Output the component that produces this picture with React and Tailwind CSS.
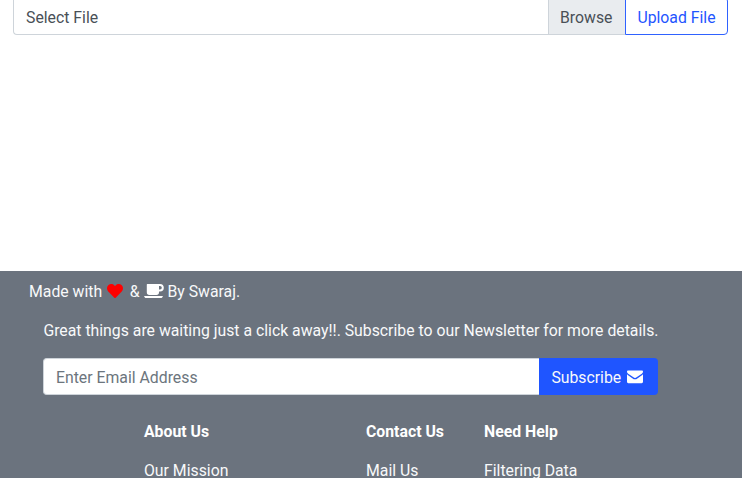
import { FaHeart } from "react-icons/fa";

const columns = [
  { title: "About Us", link: "Our Mission", width: "w-[222px]" },
  { title: "Contact Us", link: "Mail Us", width: "w-[118px]" },
  { title: "Need Help", link: "Filtering Data", width: "w-[120px]" },
];

function CoffeeIcon({ className }) {
  return (
    <svg viewBox="0 0 20 16" fill="currentColor" className={className}>
      <path
        fillRule="evenodd"
        d="M3.3 1H16a3.7 3.7 0 0 1 0 7.6h-1V9.300a2.600 2.600 0 0 1-2.600 2.600H5.400A2.600 2.600 0 0 1 2.800 9.300V1.500a.5.5 0 0 1 .5-.5ZM15 3v3.600h1a1.800 1.800 0 0 0 0-3.600Z"
      />
      <path d="M.3 13H18.700c.2 0 .2.200.1.500-.3.900-.9 1.500-1.800 1.500H2c-.9 0-1.500-.6-1.800-1.500-.1-.3-.1-.5.1-.5Z" />
    </svg>
  );
}

function EnvelopeIcon({ className }) {
  return (
    <svg viewBox="0 0 16 16" fill="currentColor" className={className}>
      <path d="M1.100 1.500h13.800c.6 0 1.100.5 1.100 1.100 0 .9-.5 1.600-1.200 2.100L9.600 8.300C9 8.700 8.600 9 8 9s-1-.3-1.600-.7L1.200 4.700C.5 4.200 0 3.500 0 2.600c0-.6.500-1.100 1.100-1.100Z" />
      <path d="M0 5.300c.2.200.5.400.7.600l5 3.500c.7.500 1.400.9 2.300.9s1.600-.4 2.300-.9l5-3.500c.2-.2.5-.4.7-.6v7.500c0 .8-.6 1.400-1.400 1.400H1.400c-.8 0-1.400-.6-1.400-1.400Z" />
    </svg>
  );
}

function UploadBar() {
  return (
    <div className="-mt-[3px] ml-[13px] flex h-[38px] w-[715px] shrink-0">
      <div className="flex min-w-0 flex-1 rounded-l border border-r-0 border-[#ced4da] text-[#495057]">
        <span className="flex-1 px-3 leading-[39px]">Select File</span>
        <span className="w-[77px] border-l border-[#ced4da] bg-[#e9ecef] pl-[11px] leading-[39px]">
          Browse
        </span>
      </div>
      <button className="w-[103px] whitespace-nowrap rounded-r border border-[#2f62ff] pt-[3px] text-[#1f55ff]">
        Upload File
      </button>
    </div>
  );
}

function Newsletter() {
  return (
    <div className="ml-[43px] mt-[15px] w-[615px]">
      <p className="whitespace-nowrap pl-[0.4px] leading-6">
        Great things are waiting just a click away!!. Subscribe to our Newsletter for more details.
      </p>
      <div className="mt-[15px] flex h-[37px]">
        <input
          className="min-w-0 flex-1 rounded-l border border-r-0 border-[#ced4da] bg-white px-3 pt-[2px] text-[#495057] placeholder:text-[#6c757d]"
          placeholder="Enter Email Address"
        />
        <button className="flex w-[119px] items-center rounded-r bg-[#1f55ff] pl-[12.4px] pt-[2px]">
          Subscribe
          <EnvelopeIcon className="mb-px ml-[6px] h-4 w-4 text-white" />
        </button>
      </div>
    </div>
  );
}

export default function App() {
  return (
    <div className="flex h-[478px] flex-col overflow-hidden bg-white font-[Roboto,sans-serif] text-[15.8px]">
      <UploadBar />
      <footer className="mt-[236px] h-[207px] shrink-0 overflow-hidden bg-[#6b737e] pt-[9px] text-[#f8f9fa]">
        <div className="ml-[29px] flex h-6 items-center whitespace-pre">
          <span>Made with </span>
          <FaHeart className="mb-[2px] ml-[1.4px] h-4 w-4 text-[#ff0000]" />
          <span className="ml-[2.4px]"> & </span>
          <CoffeeIcon className="mb-[2px] h-4 w-5 text-white" />
          <span> By Swaraj.</span>
        </div>
        <Newsletter />
        <div className="ml-36 mt-[25px] flex">
          {columns.map((column) => (
            <div key={column.title} className={column.width}>
              <h6 className="font-bold leading-6 text-white">{column.title}</h6>
              <p className="mt-[19px] whitespace-nowrap leading-4">{column.link}</p>
            </div>
          ))}
        </div>
      </footer>
    </div>
  );
}
